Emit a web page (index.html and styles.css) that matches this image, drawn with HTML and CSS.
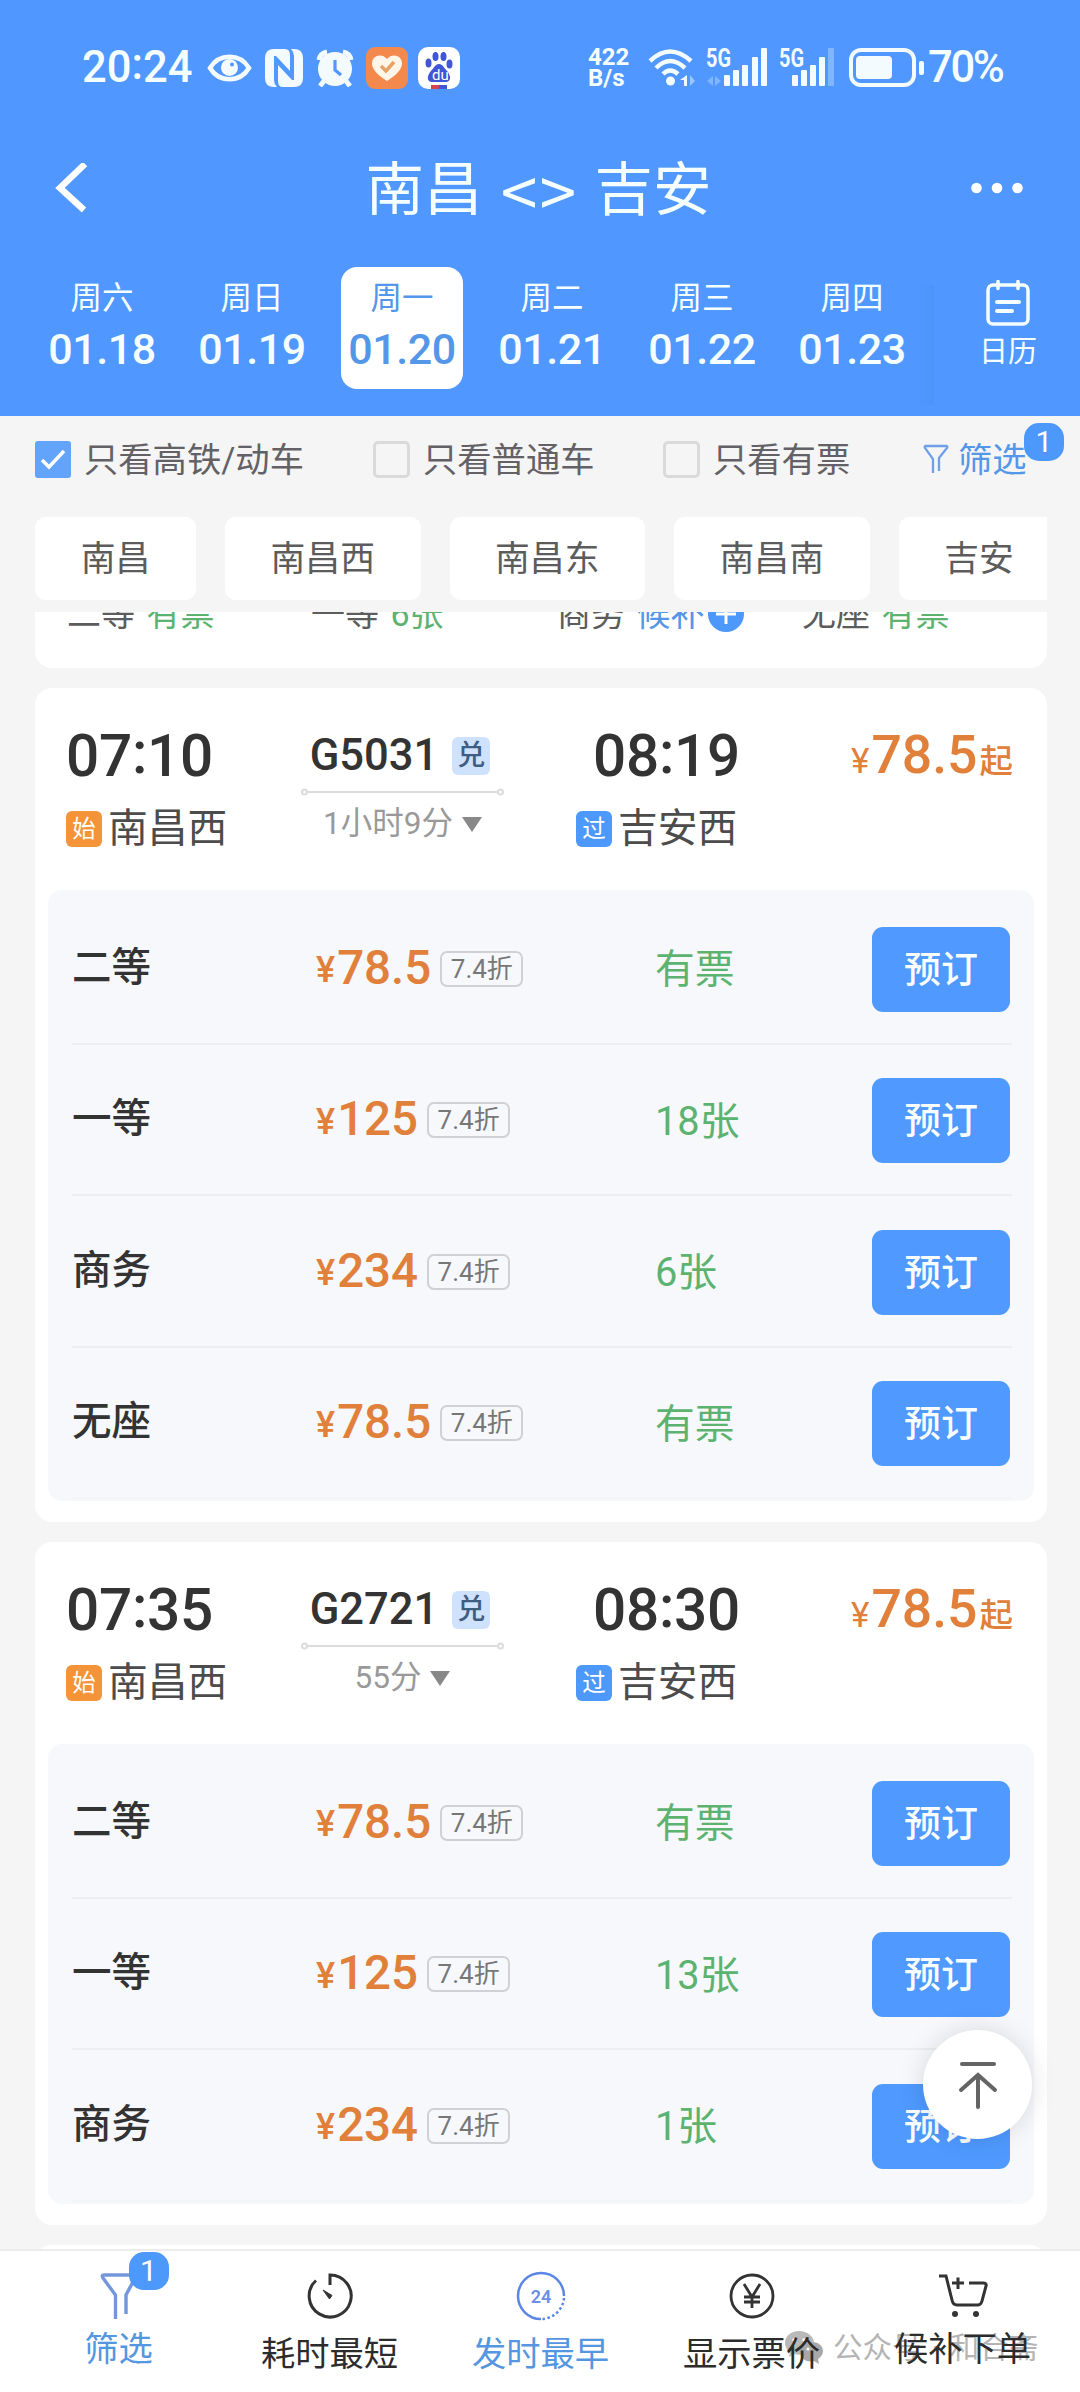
FILE: index.html
```html
<!DOCTYPE html>
<html lang="zh-CN">
<head>
<meta charset="utf-8">
<title>南昌 - 吉安</title>
<link rel="stylesheet" href="styles.css">
</head>
<body>
<div class="screen">
  <header class="top">
    <div class="status">
      <span class="clock">20<i class="colon">:</i>24</span>
      <svg class="eye" width="45" height="32" viewBox="0 0 45 32"><path d="M3 16C12 1 33 1 42 16C33 31 12 31 3 16Z" fill="none" stroke="#f4fbff" stroke-width="4.5"/><circle cx="22.500" cy="15.500" r="8.500" fill="#f4fbff"/><circle cx="25" cy="12.500" r="2" fill="#5098ff"/></svg>
      <svg class="nfc" width="38" height="38" viewBox="0 0 38 38"><path d="M9 0H20Q25 0 25 6V22L11 7H9V31Q9 35 12 38H9Q0 38 0 29V9Q0 0 9 0Z" fill="#f4fbff"/><path d="M29 38H18Q13 38 13 32V16L27 31H29V7Q29 3 26 0H29Q38 0 38 9V29Q38 38 29 38Z" fill="#f4fbff"/></svg>
      <svg class="alarm" width="38" height="38" viewBox="0 0 38 38"><circle cx="19" cy="20" r="17" fill="#f4fbff"/><path d="M8 32L4 37M30 32l4 5" stroke="#f4fbff" stroke-width="5"/><path d="M3 11A10 10 0 0 1 11 3M35 11A10 10 0 0 0 27 3" stroke="#f4fbff" stroke-width="5" fill="none"/><path d="M19 11V21L25 26" fill="none" stroke="#5098ff" stroke-width="3.200"/></svg>
      <svg class="heart" width="42" height="42" viewBox="0 0 42 42"><rect width="42" height="42" rx="9" fill="#f4894e"/><path d="M21 34C13 29 6 23 6 16.500C6 8 16 6 21 12C26 6 36 8 36 16.500C36 23 29 29 21 34Z" fill="#fff5e8"/><path d="M15 19l5 5 8-9" fill="none" stroke="#e6a368" stroke-width="3.500"/></svg>
      <svg class="paw" width="42" height="42" viewBox="0 0 42 42"><rect width="42" height="42" rx="10" fill="#fff"/><g fill="#4056d6"><ellipse cx="10.500" cy="16" rx="3" ry="4.500"/><ellipse cx="17.500" cy="9.500" rx="3" ry="4.500"/><ellipse cx="25.500" cy="9.500" rx="3" ry="4.500"/><ellipse cx="31.500" cy="17" rx="3" ry="4.500"/><path d="M21 17c4 0 5 4 8 7s6 11-2 11H15c-8 0-5-8-2-11s4-7 8-7Z"/></g><text x="14" y="33" class="paw-text">du</text><path d="M13 40h8" stroke="#d6444e" stroke-width="4"/><path d="M21 40h8" stroke="#4056d6" stroke-width="4"/></svg>
      <span class="speed"><b>422</b><b>B/s</b></span>
      <svg class="wifi" width="48" height="40" viewBox="0 0 48 40"><g fill="none" stroke="#f4fbff" stroke-width="4.500"><path d="M2 13Q22-6 43 13"/><path d="M8 20Q22 6 37 20"/><path d="M15 26Q22 19 30 26"/></g><circle cx="22.500" cy="33" r="4.500" fill="#f4fbff"/><path d="M39 27v11h-3v-6h-4z" fill="#f4fbff"/><path d="M42 27v11l5-5z" fill="#9cc6ff"/></svg>
      <svg class="signal" width="62" height="40" viewBox="0 0 62 40"><text x="0" y="19" class="net-text" textLength="25" lengthAdjust="spacingAndGlyphs">5G</text><path d="M7 28v10l-6-5zM9 28v10l6-5z" fill="#80b5ff"/><g fill="#f4fbff"><rect x="18" y="27" width="6" height="11" rx="1"/><rect x="27" y="22" width="6" height="16" rx="1"/><rect x="36" y="17" width="6" height="21" rx="1"/><rect x="46" y="9" width="6" height="29" rx="1"/><rect x="55" width="6" height="38" rx="1"/></g></svg>
      <svg class="signal-two" width="58" height="40" viewBox="0 0 58 40"><text x="0" y="19" class="net-text" textLength="25" lengthAdjust="spacingAndGlyphs">5G</text><g fill="#f4fbff"><rect x="13" y="27" width="6" height="11" rx="1"/><rect x="22" y="22" width="6" height="16" rx="1"/><rect x="31" y="17" width="6" height="21" rx="1"/><rect x="40" y="9" width="6" height="29" rx="1"/><rect x="49" width="6" height="38" rx="1" opacity=".3"/></g></svg>
      <svg class="battery" width="76" height="40" viewBox="0 0 76 40"><rect x="2" y="2" width="63" height="35" rx="10" fill="none" stroke="#f4fbff" stroke-width="4"/><rect x="7" y="8" width="36" height="23" rx="4" fill="#f4fbff"/><rect x="70" y="13" width="5" height="14" rx="2" fill="#f4fbff"/></svg>
      <span class="percent">70%</span>
    </div>
    <div class="title-bar">
      <svg width="34" height="50" viewBox="0 0 34 50"><path d="M31 1L6 25L30 47" fill="none" stroke="#fff" stroke-width="6.500"/></svg>
      <h1 class="title"><span>南昌</span><span class="arrows">&lt;&gt;</span><span>吉安</span></h1>
      <svg width="52" height="12" viewBox="0 0 52 12" fill="#fff"><circle cx="5.500" cy="6" r="5.300"/><circle cx="26" cy="6" r="5.300"/><circle cx="46.500" cy="6" r="5.300"/></svg>
    </div>
    <div class="dates">
      <div class="day"><span class="week">周六</span><span class="date">01.18</span></div>
      <div class="day"><span class="week">周日</span><span class="date">01.19</span></div>
      <div class="day day-on"><span class="week">周一</span><span class="date">01.20</span></div>
      <div class="day"><span class="week">周二</span><span class="date">01.21</span></div>
      <div class="day"><span class="week">周三</span><span class="date">01.22</span></div>
      <div class="day"><span class="week">周四</span><span class="date">01.23</span></div>
      <div class="fade"></div>
      <div class="calendar">
        <svg width="44" height="46" viewBox="0 0 44 46" fill="none" stroke="#f6ffff" stroke-width="3.500" stroke-linecap="round"><rect x="2" y="5" width="40" height="39" rx="5"/><path d="M12 1.500v7M32 1.500v7"/><path d="M11 22h22M11 31h15" stroke-width="4"/></svg>
        <span>日历</span>
      </div>
    </div>
  </header>

  <div class="filters">
    <span class="check check-on"><svg width="26" height="22" viewBox="0 0 26 22"><path d="M2 11l7 7L24 2" fill="none" stroke="#fff" stroke-width="3.500"/></svg></span>
    <span class="filter-label label-fast">只看高铁/动车</span>
    <span class="check"></span>
    <span class="filter-label label-slow">只看普通车</span>
    <span class="check"></span>
    <span class="filter-label label-left">只看有票</span>
    <span class="filter-open">
      <svg width="26" height="31" viewBox="0 0 26 31" fill="none" stroke="#6e9fe8" stroke-width="2.300"><path d="M10 29V15L2 4Q1 2 3 2H23Q25 2 24 4L16 14V27"/></svg>
      筛选<b class="count">1</b>
    </span>
  </div>

  <div class="stations">
    <span class="chip chip-short">南昌</span><span class="chip">南昌西</span><span class="chip">南昌东</span><span class="chip">南昌南</span><span class="chip chip-short">吉安</span>
  </div>

  <main class="list">
    <section class="card card-peek">
      <div class="peek-row">
        <span>二等 <em>有票</em></span>
        <span>一等 <em>6张</em></span>
        <span class="peek-wait">商务 <u>候补</u><svg width="38" height="38" viewBox="0 0 38 38"><circle cx="19" cy="19" r="18" fill="#4d98fb"/><path d="M19 9v20M9 19h20" stroke="#fff" stroke-width="3"/></svg></span>
        <span>无座 <em>有票</em></span>
      </div>
    </section>

    <section class="card">
      <div class="trip">
        <div class="stop"><span class="time">07<i class="colon">:</i>10</span><span class="place"><b class="tag tag-start">始</b>南昌西</span></div>
        <div class="train"><span class="number">G5031<b class="redeem">兑</b></span><svg class="line" width="203" height="8" viewBox="0 0 203 8" fill="none" stroke="#dcdcdc" stroke-width="2"><path d="M6 4H197"/><circle cx="3.500" cy="4" r="2.500"/><circle cx="199.500" cy="4" r="2.500"/></svg><span class="span">1小时9分<i class="tri"></i></span></div>
        <div class="stop stop-end"><span class="time">08<i class="colon">:</i>19</span><span class="place"><b class="tag tag-pass">过</b>吉安西</span></div>
        <div class="from"><small>¥</small>78.5<span>起</span></div>
      </div>
      <div class="seats">
        <div class="seat"><span class="class">二等</span><span class="price"><small>¥</small>78.5<b class="off">7.4折</b></span><span class="left">有票</span><span class="book">预订</span></div>
        <div class="seat"><span class="class">一等</span><span class="price"><small>¥</small>125<b class="off">7.4折</b></span><span class="left">18张</span><span class="book">预订</span></div>
        <div class="seat"><span class="class">商务</span><span class="price"><small>¥</small>234<b class="off">7.4折</b></span><span class="left">6张</span><span class="book">预订</span></div>
        <div class="seat"><span class="class">无座</span><span class="price"><small>¥</small>78.5<b class="off">7.4折</b></span><span class="left">有票</span><span class="book">预订</span></div>
      </div>
    </section>

    <section class="card">
      <div class="trip">
        <div class="stop"><span class="time">07<i class="colon">:</i>35</span><span class="place"><b class="tag tag-start">始</b>南昌西</span></div>
        <div class="train"><span class="number">G2721<b class="redeem">兑</b></span><svg class="line" width="203" height="8" viewBox="0 0 203 8" fill="none" stroke="#dcdcdc" stroke-width="2"><path d="M6 4H197"/><circle cx="3.500" cy="4" r="2.500"/><circle cx="199.500" cy="4" r="2.500"/></svg><span class="span">55分<i class="tri"></i></span></div>
        <div class="stop stop-end"><span class="time">08<i class="colon">:</i>30</span><span class="place"><b class="tag tag-pass">过</b>吉安西</span></div>
        <div class="from"><small>¥</small>78.5<span>起</span></div>
      </div>
      <div class="seats">
        <div class="seat"><span class="class">二等</span><span class="price"><small>¥</small>78.5<b class="off">7.4折</b></span><span class="left">有票</span><span class="book">预订</span></div>
        <div class="seat"><span class="class">一等</span><span class="price"><small>¥</small>125<b class="off">7.4折</b></span><span class="left">13张</span><span class="book">预订</span></div>
        <div class="seat"><span class="class">商务</span><span class="price"><small>¥</small>234<b class="off">7.4折</b></span><span class="left">1张</span><span class="book">预订</span></div>
      </div>
    </section>

    <section class="card card-next"></section>
  </main>

  <nav class="tabs">
    <div class="watermark">
      <svg width="40" height="34" viewBox="0 0 40 34"><path d="M14 0C6 0 0 5 0 12c0 4 2 7 5 9l-1 5 5-3c12 3 20-3 20-11C29 5 22 0 14 0Z" fill="#b9b9b9"/><path d="M27 11c-7 0-12 4-12 10s6 11 14 9l5 3-1-5c9-6 5-17-6-17Z" fill="#a8a8a8"/><g fill="#fff"><circle cx="9" cy="9" r="1.700"/><circle cx="19" cy="9" r="1.700"/><circle cx="23" cy="18" r="1.500"/><circle cx="31" cy="18" r="1.500"/></g></svg>
      <span>公众号 · 和合斋</span>
    </div>
    <div class="tab tab-on tab-up">
      <span class="icon"><svg width="38" height="46" viewBox="0 0 38 46" fill="none" stroke="#7496dc" stroke-width="3.400"><path d="M15.500 46V22L3 5Q1 2 4 2H34Q37 2 35 5L26 22V41"/></svg><b class="count">1</b></span>
      <span>筛选</span>
    </div>
    <div class="tab">
      <span class="icon"><svg width="48" height="50" viewBox="0 0 48 50" fill="none" stroke="#333" stroke-width="3"><path d="M24 14V4A21 21 0 1 1 10 9.500"/><path d="M17 19L26 24.500L23.500 28Z" fill="#333" stroke-width="1"/></svg></span>
      <span>耗时最短</span>
    </div>
    <div class="tab tab-on">
      <span class="icon"><svg width="50" height="50" viewBox="0 0 50 50" fill="none" stroke="#5c86e6" stroke-width="2.500"><path d="M48 25A23 23 0 1 0 25 48"/><path d="M48 27A23 23 0 0 1 25 48" stroke-dasharray="2.500 2.500"/><text x="25" y="32" class="day-text">24</text></svg></span>
      <span>发时最早</span>
    </div>
    <div class="tab">
      <span class="icon"><svg width="48" height="48" viewBox="0 0 48 48" fill="none" stroke="#333" stroke-width="2.800"><circle cx="24" cy="24" r="21"/><path d="M16 12l8 13 8-13M24 24v12M16 25h16M16 30h16"/></svg></span>
      <span>显示票价</span>
    </div>
    <div class="tab tab-up">
      <span class="icon"><svg width="50" height="46" viewBox="0 0 50 46" fill="none" stroke="#333" stroke-width="3"><path d="M1 3H8L14 27Q15 32 19 32H40Q43 32 44 28L48 13Q49 10 45 10H31"/><path d="M20 4.500V16M14 10h12"/><g fill="#333" stroke="none"><circle cx="17" cy="41" r="3"/><circle cx="38" cy="41" r="3"/></g></svg></span>
      <span>候补下单</span>
    </div>
  </nav>

  <div class="to-top"><svg width="40" height="48" viewBox="0 0 40 48" fill="none" stroke="#646464" stroke-width="4" stroke-linecap="round"><path d="M4 3H36"/><path d="M3 29L20 14L37 29M20 15V46"/></svg></div>
</div>
</body>
</html>
```

FILE: styles.css
```css
* { box-sizing: border-box; }
body {
  margin: 0;
  font-family: Roboto, "Noto Sans CJK SC", sans-serif;
  color: #333;
  background: #f5f5f5;
}
i, em { font-style: normal; }
svg { display: block; flex: none; }
.screen {
  position: relative;
  width: 1080px;
  height: 2392px;
  overflow: hidden;
  display: flex;
  flex-direction: column;
}

/* blue header */
.top { height: 416px; flex: none; background: #5098ff; color: #f6ffff; }
.status { display: flex; align-items: center; height: 136px; padding-left: 82px; }
.clock, .percent { font-size: 43.500px; font-weight: 500; line-height: 50px; white-space: nowrap; }
.clock { width: 125px; }
.colon { vertical-align: .06em; line-height: 1; }
.nfc { margin-left: 13px; }
.alarm { margin-left: 13px; }
.heart { margin-left: 12px; }
.paw { margin-left: 10px; }
.paw-text { font-size: 15px; fill: #fff; }
.speed { display: flex; flex-direction: column; width: 60px; margin-left: 128px; font-size: 24px; line-height: 21px; }
.speed b { font-weight: 700; }
.net-text { font-size: 25px; font-weight: 700; fill: #f4fbff; }
.signal { margin-left: 10px; }
.signal-two { margin-left: 11px; }
.battery { margin-left: 12px; }
.percent { margin-left: 3px; letter-spacing: -2.300px; }

.title-bar { display: flex; align-items: center; height: 104px; padding: 0 57px 0 54px; justify-content: space-between; }
.title { margin: 0; display: flex; align-items: center; font-size: 58.500px; font-weight: 400; line-height: 80px; padding: 4px 0 0 18px; }
.arrows { width: 112px; text-align: center; font-size: 66px; letter-spacing: 2px; padding-left: 2px; font-family: "Noto Sans CJK SC", sans-serif; margin-top: -5px; }

.dates { display: flex; height: 176px; padding-left: 41px; }
.day { width: 122px; height: 122px; margin: 27px 28px 0 0; display: flex; flex-direction: column; align-items: center; border-radius: 16px; flex: none; }
.day-on { background: #fff; color: #5496e8; }
.week { font-size: 31.500px; line-height: 38px; margin-top: 13px; }
.date { font-size: 43px; line-height: 48px; margin-top: 7px; letter-spacing: -.4px; font-weight: 500; }
.fade { width: 18px; height: 120px; margin: 45px 0 0 -25px; background: linear-gradient(to right, rgba(60, 125, 225, 0), rgba(60, 125, 225, .16)); flex: none; }
.calendar { display: flex; flex-direction: column; align-items: center; width: 60px; margin: 40px 0 0 44px; font-size: 29px; line-height: 40px; }
.calendar span { margin-top: 6px; }

/* quick filters */
.filters { display: flex; align-items: center; height: 87px; flex: none; padding-left: 35px; font-size: 34.300px; line-height: 44px; color: #646166; white-space: nowrap; }
.check { width: 37px; height: 37px; border: 3px solid #dadada; border-radius: 5px; flex: none; }
.check-on { width: 36px; border: 0; border-radius: 3px; background: #62a3fb; display: flex; align-items: center; justify-content: center; }
.filter-label { margin-left: 13px; }
.label-fast { width: 289px; }
.label-slow { width: 240px; }
.label-left { width: 210px; }
.filter-open { position: relative; display: flex; align-items: center; gap: 9px; color: #5496e8; }
.count { position: absolute; display: flex; align-items: center; justify-content: center; width: 40px; height: 38px; border-radius: 15px; background: #4d98fb; color: #fff; font-size: 30px; font-weight: 400; line-height: 36px; }
.filter-open .count { left: 101px; top: -15px; }

.stations { display: flex; gap: 29px; width: 1012px; height: 97px; margin-left: 35px; padding: 14px 0 0; overflow: hidden; flex: none; }
.chip { display: flex; align-items: center; justify-content: center; width: 195.500px; height: 83px; flex: none; border-radius: 11px; background: #fff; color: #5c5c5c; font-size: 34.800px; line-height: 44px; }
.chip-short { width: 161px; }

/* train list */
.list { display: flex; flex-direction: column; gap: 20px; width: 1012px; height: 1637px; margin: 12px 0 0 35px; flex: none; overflow: hidden; }
.card { border-radius: 17px; background: #fff; flex: none; }
.card-peek { height: 56px; border-radius: 0 0 17px 17px; overflow: hidden; }
.card-next { height: 60px; }
.peek-row { display: grid; grid-template-columns: 244px 246px 245px auto; align-items: center; height: 44px; margin: -20px 0 0 32px; font-size: 34px; line-height: 44px; color: #5c5c5c; white-space: nowrap; word-spacing: 3px; }
.peek-row em { color: #5cb370; }
.peek-row u { color: #5496e8; text-decoration: none; }
.peek-wait { display: flex; align-items: center; white-space: pre; }
.peek-wait svg { margin-left: 3px; }
.trip { display: flex; height: 202px; padding: 0 34px 0 31px; }
.stop { width: 235px; display: flex; flex-direction: column; }
.stop-end { width: 240px; margin-left: 72px; }
.time { font-size: 58.500px; line-height: 70px; margin-top: 33px; font-weight: 500; letter-spacing: -.3px; }
.stop .time { padding-left: 0; }
.stop-end .time { padding-left: 17px; }
.place { display: flex; align-items: center; gap: 6px; margin-top: 15px; font-size: 39.800px; line-height: 46px; color: #4c4c4c; }
.tag { width: 36px; height: 36px; border-radius: 6px; display: flex; align-items: center; justify-content: center; color: #fff; font-size: 23.500px; font-weight: 400; line-height: 30px; }
.tag-start { background: #f49338; }
.tag-pass { background: #4d98fb; }
.train { width: 203px; display: flex; flex-direction: column; align-items: center; }
.number { display: flex; align-items: center; margin-top: 43px; font-size: 43.500px; line-height: 50px; font-weight: 500; margin-left: -5px; }
.redeem { width: 38px; height: 38px; margin-left: 14px; border-radius: 6px; background: #cee2fd; color: #3f5c82; display: flex; align-items: center; justify-content: center; font-size: 28px; line-height: 34px; font-weight: 500; }
.line { margin-top: 7px; }
.span { display: flex; align-items: center; height: 40px; margin-top: 8px; font-size: 31.500px; line-height: 40px; color: #999; }
.tri { border: 10px solid transparent; border-top: 15px solid #888; border-bottom: 0; margin-left: 9px; }
.from { display: flex; align-items: baseline; margin-left: auto; margin-top: 37px; font-size: 53.500px; line-height: 60px; font-weight: 500; color: #e0803a; height: 60px; }
.from small { font-size: 35px; font-weight: 400; margin-right: 2px; }
.from span { font-size: 33.500px; font-weight: 500; margin-left: 2px; }

.seats { margin: 0 13px 21px 13px; padding: 3px 22px 2px 24px; border-radius: 14px; background: #f6f8fc; }
.seat { display: flex; align-items: center; height: 151.500px; border-bottom: 2px solid #eceef2; }
.seat:last-child { border-bottom-color: #f2f4f8; }
.class { width: 244px; font-size: 39.500px; line-height: 50px; font-weight: 500; }
.price { width: 339px; display: flex; align-items: center; font-size: 47.500px; line-height: 56px; font-weight: 500; color: #e0803a; }
.price small { font-size: 36px; font-weight: 500; padding-top: 5px; margin-right: 2px; }
.off { width: 83px; height: 36px; margin: 2px 0 0 9px; border: 2px solid #cfd1d5; border-radius: 7px; display: flex; align-items: center; justify-content: center; font-size: 26px; line-height: 32px; font-weight: 400; color: #777; }
.left { width: 217px; font-size: 39.800px; line-height: 50px; color: #5cb370; padding-top: 5px; }
.book { width: 138px; height: 85px; margin-top: 3px; padding-top: 3px; border-radius: 11px; background: #4f99ff; color: #fafeff; display: flex; align-items: center; justify-content: center; font-size: 37px; line-height: 46px; font-weight: 500; }

/* bottom tabs */
.tabs { position: relative; display: flex; height: 143px; flex: none; padding: 0 12px 0 13px; background: #fff; border-top: 2px solid #ececec; }
.tab { position: relative; width: 211px; display: flex; flex-direction: column; align-items: center; padding-top: 19px; font-size: 34.300px; line-height: 44px; color: #2c2c2c; }
.tab-on { color: #5496e0; }
.icon { position: relative; display: flex; align-items: center; justify-content: center; height: 52px; margin-bottom: 10px; }
.tab-up .icon { margin-bottom: 5px; }
.tab .count { left: 29px; top: -18px; }
.day-text { font-size: 18px; font-weight: 600; text-anchor: middle; fill: #6a8fe4; stroke: none; }
.watermark { position: absolute; left: 785px; top: 78px; display: flex; align-items: center; gap: 8px; color: #b4b4b4; font-size: 29.500px; line-height: 38px; white-space: nowrap; word-spacing: 3px; }

.to-top { position: absolute; left: 923px; top: 2030px; width: 109px; height: 109px; border-radius: 50%; background: #fff; display: flex; align-items: center; justify-content: center; box-shadow: 0 0 26px rgba(0, 0, 0, .13); }
```
